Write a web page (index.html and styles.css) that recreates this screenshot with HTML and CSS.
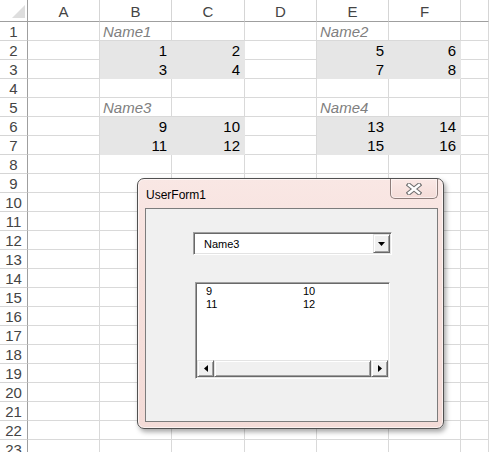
FILE: index.html
```html
<!DOCTYPE html>
<html>
<head>
<meta charset="utf-8">
<link rel="stylesheet" href="styles.css">
</head>
<body>
<div class="sheet">
  <div class="grid">
    <div class="hd corner"><svg width="28" height="21" viewBox="0 0 28 21"><polygon points="25,5 25,18 12,18" fill="#dedede"/></svg></div>
    <div class="hd">A</div><div class="hd">B</div><div class="hd">C</div><div class="hd">D</div><div class="hd">E</div><div class="hd">F</div><div class="hd"></div>

    <div class="rh">1</div><div class="c"></div><div class="c lbl">Name1</div><div class="c"></div><div class="c"></div><div class="c lbl">Name2</div><div class="c"></div><div class="c"></div>
    <div class="rh">2</div><div class="c"></div><div class="c f">1</div><div class="c f">2</div><div class="c"></div><div class="c f">5</div><div class="c f">6</div><div class="c"></div>
    <div class="rh">3</div><div class="c"></div><div class="c f">3</div><div class="c f">4</div><div class="c"></div><div class="c f">7</div><div class="c f">8</div><div class="c"></div>
    <div class="rh">4</div><div class="c"></div><div class="c"></div><div class="c"></div><div class="c"></div><div class="c"></div><div class="c"></div><div class="c"></div>
    <div class="rh">5</div><div class="c"></div><div class="c lbl">Name3</div><div class="c"></div><div class="c"></div><div class="c lbl">Name4</div><div class="c"></div><div class="c"></div>
    <div class="rh">6</div><div class="c"></div><div class="c f">9</div><div class="c f">10</div><div class="c"></div><div class="c f">13</div><div class="c f">14</div><div class="c"></div>
    <div class="rh">7</div><div class="c"></div><div class="c f">11</div><div class="c f">12</div><div class="c"></div><div class="c f">15</div><div class="c f">16</div><div class="c"></div>
    <div class="rh">8</div><div class="c"></div><div class="c"></div><div class="c"></div><div class="c"></div><div class="c"></div><div class="c"></div><div class="c"></div>
    <div class="rh">9</div><div class="c"></div><div class="c"></div><div class="c"></div><div class="c"></div><div class="c"></div><div class="c"></div><div class="c"></div>
    <div class="rh">10</div><div class="c"></div><div class="c"></div><div class="c"></div><div class="c"></div><div class="c"></div><div class="c"></div><div class="c"></div>
    <div class="rh">11</div><div class="c"></div><div class="c"></div><div class="c"></div><div class="c"></div><div class="c"></div><div class="c"></div><div class="c"></div>
    <div class="rh">12</div><div class="c"></div><div class="c"></div><div class="c"></div><div class="c"></div><div class="c"></div><div class="c"></div><div class="c"></div>
    <div class="rh">13</div><div class="c"></div><div class="c"></div><div class="c"></div><div class="c"></div><div class="c"></div><div class="c"></div><div class="c"></div>
    <div class="rh">14</div><div class="c"></div><div class="c"></div><div class="c"></div><div class="c"></div><div class="c"></div><div class="c"></div><div class="c"></div>
    <div class="rh">15</div><div class="c"></div><div class="c"></div><div class="c"></div><div class="c"></div><div class="c"></div><div class="c"></div><div class="c"></div>
    <div class="rh">16</div><div class="c"></div><div class="c"></div><div class="c"></div><div class="c"></div><div class="c"></div><div class="c"></div><div class="c"></div>
    <div class="rh">17</div><div class="c"></div><div class="c"></div><div class="c"></div><div class="c"></div><div class="c"></div><div class="c"></div><div class="c"></div>
    <div class="rh">18</div><div class="c"></div><div class="c"></div><div class="c"></div><div class="c"></div><div class="c"></div><div class="c"></div><div class="c"></div>
    <div class="rh">19</div><div class="c"></div><div class="c"></div><div class="c"></div><div class="c"></div><div class="c"></div><div class="c"></div><div class="c"></div>
    <div class="rh">20</div><div class="c"></div><div class="c"></div><div class="c"></div><div class="c"></div><div class="c"></div><div class="c"></div><div class="c"></div>
    <div class="rh">21</div><div class="c"></div><div class="c"></div><div class="c"></div><div class="c"></div><div class="c"></div><div class="c"></div><div class="c"></div>
    <div class="rh">22</div><div class="c"></div><div class="c"></div><div class="c"></div><div class="c"></div><div class="c"></div><div class="c"></div><div class="c"></div>
    <div class="rh">23</div><div class="c"></div><div class="c"></div><div class="c"></div><div class="c"></div><div class="c"></div><div class="c"></div><div class="c"></div>
  </div>

  <div class="form">
    <div class="titlebar">
      <span class="title">UserForm1</span>
      <div class="close">
        <svg width="16" height="12" viewBox="0 0 16 12">
          <path d="M3 2 L13 10 M13 2 L3 10" stroke="#6f6f6f" stroke-width="4.6" stroke-linecap="square" fill="none"/>
          <path d="M3 2 L13 10 M13 2 L3 10" stroke="#ffffff" stroke-width="2.4" stroke-linecap="square" fill="none"/>
        </svg>
      </div>
    </div>
    <div class="client">
      <div class="combo">
        <span class="combo-text">Name3</span>
        <div class="dd-btn"><svg width="7" height="4" viewBox="0 0 7 4"><polygon points="0,0 7,0 3.5,4" fill="#000"/></svg></div>
      </div>
      <div class="listbox">
        <div class="items">
          <div class="item"><span class="col1">9</span><span>10</span></div>
          <div class="item"><span class="col1">11</span><span>12</span></div>
        </div>
        <div class="hscroll">
          <div class="sb-btn"><svg width="4" height="7" viewBox="0 0 4 7"><polygon points="4,0 4,7 0,3.5" fill="#000"/></svg></div>
          <div class="sb-thumb"></div>
          <div class="sb-btn"><svg width="4" height="7" viewBox="0 0 4 7"><polygon points="0,0 0,7 4,3.5" fill="#000"/></svg></div>
        </div>
      </div>
    </div>
  </div>
</div>
</body>
</html>
```

FILE: styles.css
```css
* { box-sizing: border-box; }
html, body { margin: 0; padding: 0; background: #fff; }
body { width: 489px; height: 452px; overflow: hidden; font-family: "Liberation Sans", Arial, sans-serif; }

.sheet { position: relative; width: 489px; height: 452px; overflow: hidden; }

.grid {
  display: grid;
  grid-template-columns: 28px 72px 72px 73px 72px 72px 72px 1fr;
  grid-template-rows: 22px;
  grid-auto-rows: 19px;
}

.hd {
  background: #fff;
  border-right: 1px solid #d5d5d5;
  border-bottom: 1px solid #9f9f9f;
  color: #444;
  font-size: 15px;
  text-align: center;
  line-height: 20px;
  padding-top: 2px;
}
.corner { border-right: 1px solid #9f9f9f; padding: 0; line-height: 0; }
.corner svg { display: block; }

.rh {
  border-right: 1px solid #9f9f9f;
  border-bottom: 1px solid #d5d5d5;
  color: #444;
  font-size: 15px;
  text-align: center;
  line-height: 18px;
  padding-top: 1px;
  overflow: hidden;
}

.c {
  border-right: 1px solid #d9d9d9;
  border-bottom: 1px solid #d9d9d9;
  font-size: 15px;
  line-height: 18px;
  padding-top: 1px;
  overflow: hidden;
  white-space: nowrap;
  color: #000;
}
.f {
  background: #e6e6e6;
  border-color: #e6e6e6;
  text-align: right;
  padding-right: 4px;
}
.lbl {
  font-style: italic;
  color: #808080;
  padding-left: 3px;
}

/* UserForm window */
.form {
  position: absolute;
  left: 137px;
  top: 178px;
  width: 307px;
  height: 251px;
  border: 1px solid #505050;
  border-radius: 7px;
  background: linear-gradient(180deg, #f9e7e4 0%, #f6e0dc 40%, #f3dbd7 100%);
  box-shadow: 2px 3px 5px rgba(0,0,0,0.35), inset 0 0 0 1px rgba(255,255,255,0.6);
  display: flex;
  flex-direction: column;
  padding: 0 5px 6px 7px;
}
.titlebar {
  position: relative;
  height: 29px;
  flex: none;
}
.title {
  display: block;
  font-size: 12px;
  color: #000;
  line-height: 12px;
  padding-top: 10px;
  padding-left: 1px;
}
.close {
  position: absolute;
  right: 0;
  top: 0;
  width: 48px;
  height: 20px;
  border: 1px solid #8d7d7a;
  border-top: none;
  border-radius: 0 0 5px 5px;
  background: linear-gradient(180deg, #fae9e6, #f4dcd8);
  box-shadow: inset 0 0 0 1px rgba(255,255,255,0.5);
  display: flex;
  align-items: center;
  justify-content: center;
}
.close svg { display: block; }

.client {
  flex: 1;
  background: #f0f0f0;
  border: 1px solid #7c7c7c;
  display: flex;
  flex-direction: column;
  align-items: flex-start;
  padding: 23px 0 0 47px;
  font-family: "Liberation Sans", Tahoma, sans-serif;
}

.combo {
  width: 199px;
  height: 23px;
  background: #fff;
  border: 1px solid;
  border-color: #a0a0a0 #ffffff #ffffff #a0a0a0;
  box-shadow: inset 1px 1px 0 #696969, inset -1px -1px 0 #e3e3e3;
  display: flex;
  align-items: center;
  padding: 1px 1px 1px 1px;
}
.combo-text {
  flex: 1;
  font-size: 11px;
  padding-left: 9px;
  color: #000;
}
.dd-btn {
  width: 17px;
  height: 19px;
  background: #f0f0f0;
  border: 1px solid;
  border-color: #e3e3e3 #696969 #696969 #e3e3e3;
  box-shadow: inset 1px 1px 0 #fff, inset -1px -1px 0 #a0a0a0;
  display: flex;
  align-items: center;
  justify-content: center;
}
.dd-btn svg, .sb-btn svg { display: block; }

.listbox {
  margin: 27px 0 0 2px;
  width: 195px;
  height: 97px;
  background: #fff;
  border: 1px solid;
  border-color: #a0a0a0 #ffffff #ffffff #a0a0a0;
  box-shadow: inset 1px 1px 0 #696969, inset -1px -1px 0 #e3e3e3;
  padding: 1px;
  display: flex;
  flex-direction: column;
}
.items {
  flex: 1;
  padding: 1px 0 0 9px;
  font-size: 11px;
  color: #000;
}
.item {
  display: flex;
  height: 13px;
  line-height: 13px;
}
.col1 { width: 97px; }

.hscroll {
  height: 17px;
  display: flex;
  flex: none;
}
.sb-btn {
  width: 17px;
  height: 17px;
  background: #f0f0f0;
  border: 1px solid;
  border-color: #e3e3e3 #696969 #696969 #e3e3e3;
  box-shadow: inset 1px 1px 0 #fff, inset -1px -1px 0 #a0a0a0;
  display: flex;
  align-items: center;
  justify-content: center;
}
.sb-thumb {
  flex: 1;
  background: #f0f0f0;
  border: 1px solid;
  border-color: #e3e3e3 #696969 #696969 #e3e3e3;
  box-shadow: inset 1px 1px 0 #fff, inset -1px -1px 0 #a0a0a0;
}
```
